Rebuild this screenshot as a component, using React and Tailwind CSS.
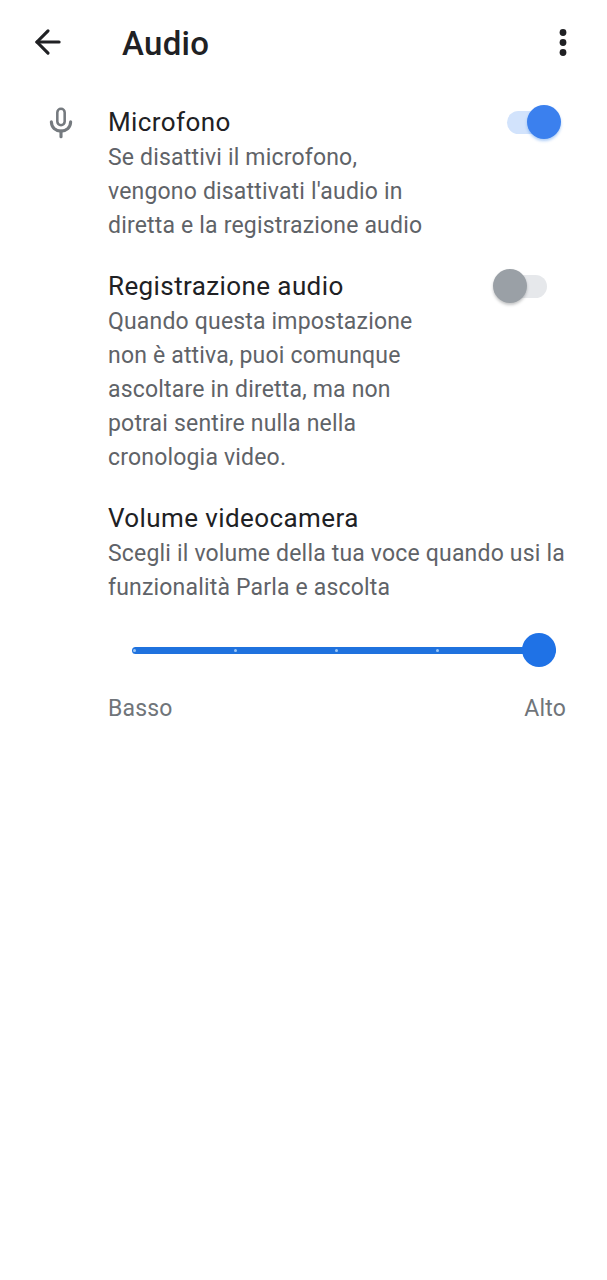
import React from 'react';
import { ArrowLeft } from 'lucide-react';

const Toggle = ({ on }) => (
  <div className={on ? 'relative w-[54px] h-[34px] mr-[46px] flex items-center' : 'relative w-[54px] h-[34px] mr-[60px] flex items-center'}>
    <div className={on ? 'w-[48px] h-[23px] rounded-full bg-[#d2e3fc]' : 'w-[48px] h-[23px] ml-[6px] rounded-full bg-[#e6e8eb]'} />
    <div
      className={
        on
          ? 'absolute right-0 top-0 w-[34px] h-[34px] rounded-full bg-[#3b80ee] shadow-[0_2px_3px_rgba(26,115,232,0.35)]'
          : 'absolute left-0 top-0 w-[34px] h-[34px] rounded-full bg-[#9aa0a6] shadow-[0_2px_3px_rgba(60,64,67,0.3)]'
      }
    />
  </div>
);

const Setting = ({ title, toggle, children }) => (
  <div>
    <div className="flex items-center justify-between h-[34px]">
      <h2 className="text-[26px] leading-[34px] tracking-[0.4px] text-[#202124]">{title}</h2>
      {toggle}
    </div>
    <div className="mt-[2px] text-[23px] leading-[34px] tracking-[0.18px] text-[#5f6368]">{children}</div>
  </div>
);

const App = () => {
  return (
    <div className="w-[607px] h-[1280px] bg-white font-['Roboto',sans-serif] overflow-hidden">
      <header className="flex items-center h-[84px] pl-[29px] pr-[40px]">
        <ArrowLeft size={38} strokeWidth={2} className="text-[#202124]" />
        <h1 className="ml-[55px] mt-[4px] text-[33px] tracking-[0.3px] font-medium text-[#202124]">Audio</h1>
        <svg className="ml-auto mt-[1px]" width="8" height="30" viewBox="0 0 8 30" fill="#202124">
          <circle cx="4" cy="4.5" r="3.4" />
          <circle cx="4" cy="14.5" r="3.4" />
          <circle cx="4" cy="24.5" r="3.4" />
        </svg>
      </header>

      <main className="flex pt-[21px]">
        <div className="w-[108px] pl-[44px] pt-[1px] shrink-0">
          <svg width="34" height="34" viewBox="0 0 24 24" fill="none" stroke="#757a7f" strokeWidth="2.2" strokeLinecap="round">
            <rect x="9.4" y="2" width="5.2" height="11.6" rx="2.6" strokeWidth="1.8" />
            <path d="M5.2 11.2c0 4 3 6.5 6.8 6.5s6.8-2.5 6.8-6.5" />
            <path d="M12 17.7v4" />
          </svg>
        </div>

        <div className="flex-1 flex flex-col">
          <Setting title="Microfono" toggle={<Toggle on />}>
            <p>Se disattivi il microfono,</p>
            <p>vengono disattivati l'audio in</p>
            <p>diretta e la registrazione audio</p>
          </Setting>

          <div className="mt-[26px]">
            <Setting title="Registrazione audio" toggle={<Toggle />}>
              <p>Quando questa impostazione</p>
              <p>non è attiva, puoi comunque</p>
              <p>ascoltare in diretta, ma non</p>
              <p>potrai sentire nulla nella</p>
              <p>cronologia video.</p>
            </Setting>
          </div>

          <div className="mt-[26px]">
            <Setting title="Volume videocamera">
              <p>Scegli il volume della tua voce quando usi la</p>
              <p>funzionalità Parla e ascolta</p>
            </Setting>
          </div>

          <div className="relative h-[34px] mt-[28px] ml-[24px] w-[424px] flex items-center">
            <div className="w-full h-[7px] rounded-full bg-[#1f72de] flex items-center justify-between pl-[1px] pr-[117px]">
              <span className="w-[3px] h-[3px] rounded-full bg-[#9cc6f5]" />
              <span className="w-[3px] h-[3px] rounded-full bg-[#9cc6f5]" />
              <span className="w-[3px] h-[3px] rounded-full bg-[#9cc6f5]" />
              <span className="w-[3px] h-[3px] rounded-full bg-[#9cc6f5]" />
            </div>
            <div className="absolute right-0 top-0 w-[34px] h-[34px] rounded-full bg-[#1f72e6]" />
          </div>

          <div className="flex justify-between mt-[25px] pr-[41px] text-[23px] tracking-[0.18px] leading-[34px] text-[#70757a]">
            <span>Basso</span>
            <span>Alto</span>
          </div>
        </div>
      </main>
    </div>
  );
};

export default App;
